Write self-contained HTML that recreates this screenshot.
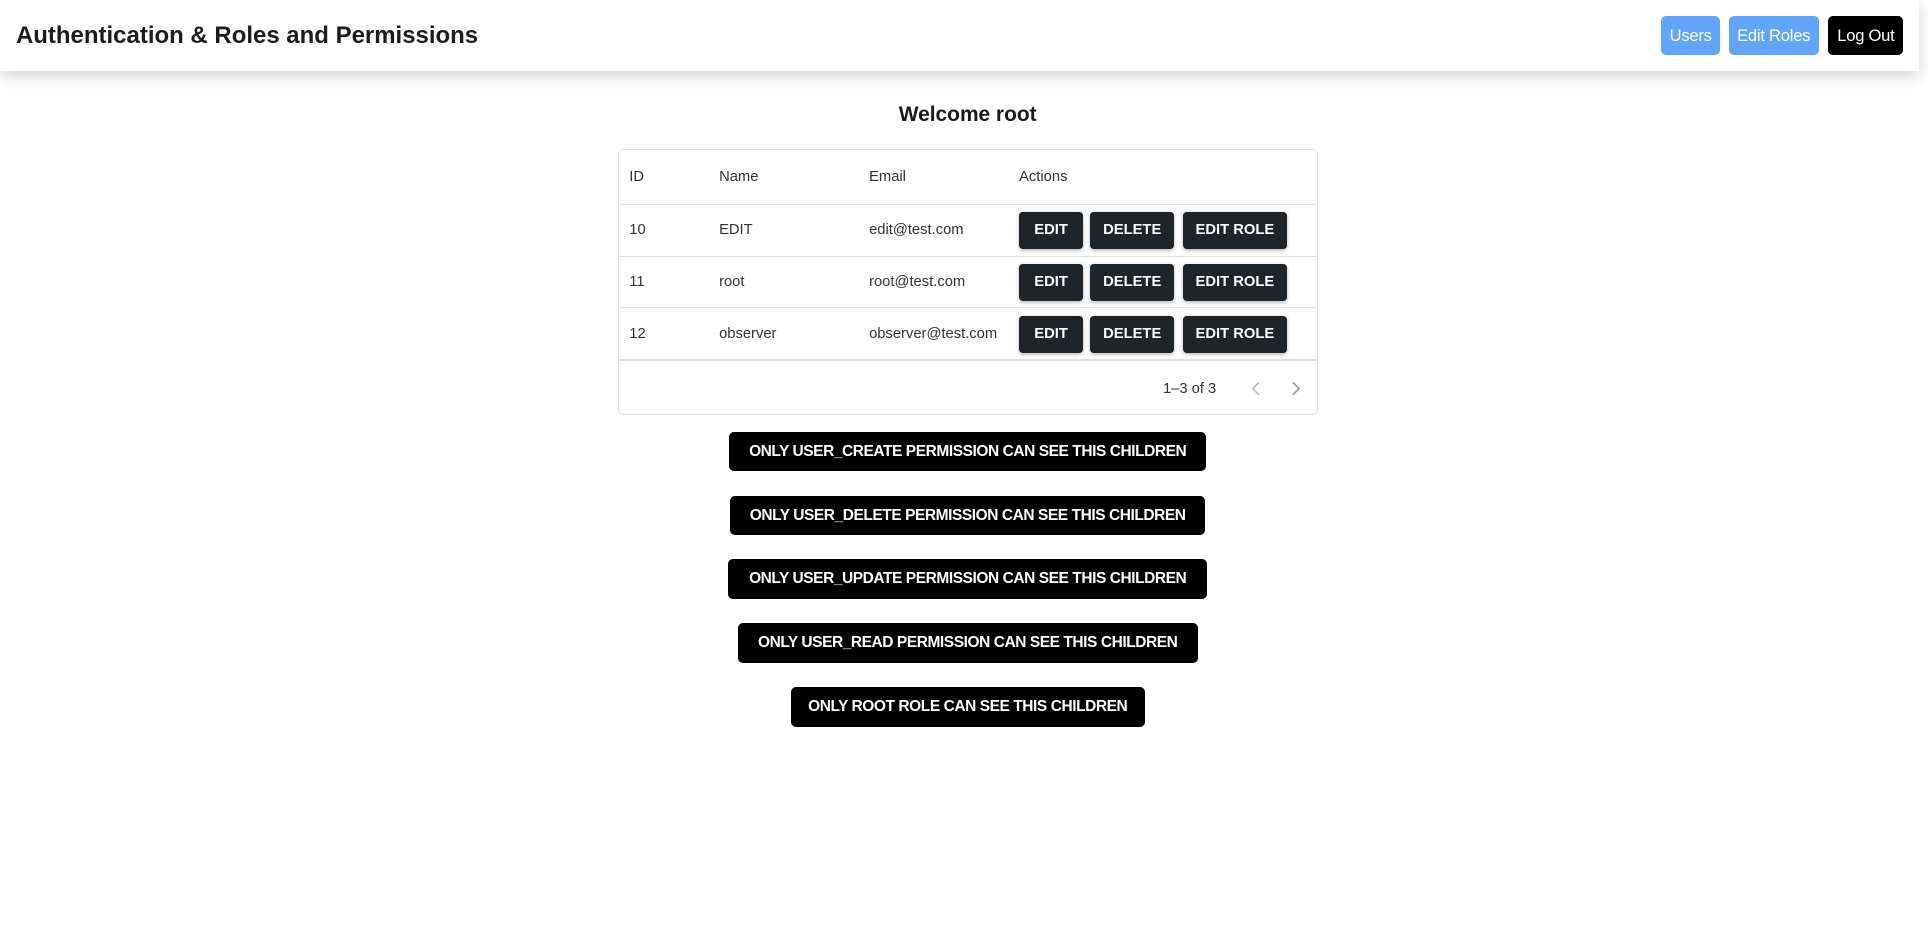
<!DOCTYPE html>
<html><head><meta charset="utf-8"><style>
html{zoom:1.22959}
body{margin:0;width:1568px;height:768px;background:#fff;font-family:"Liberation Sans",Arial,sans-serif;position:relative;overflow:hidden;color:#1a1a1a}
.hdr{position:absolute;left:0;top:0;width:1561px;height:58px;background:#fff;box-shadow:0 4px 12px rgba(0,0,0,.18)}
.title{position:absolute;left:13px;top:18px;font-size:19.5px;font-weight:bold;color:#1c1c1c;white-space:nowrap}
.nb{position:absolute;top:13px;height:32px;line-height:33px;border-radius:4px;color:#fff;font-size:13.5px;text-align:center;white-space:nowrap;letter-spacing:-0.2px}
.wel{position:absolute;left:0;width:1574px;top:84px;text-align:center;font-size:17px;font-weight:bold;color:#1a1a1a}
.tbl{position:absolute;left:503px;top:121px;width:567px;height:215px;border:1px solid #e0e0e0;border-radius:4px}
.row{position:absolute;left:0;width:567px;border-bottom:1px solid #e0e0e0;font-size:12px;color:#333}
.c{position:absolute;white-space:nowrap}
.b{position:absolute;top:6px;height:30px;line-height:30px;background:#1f2428;color:#fff;border-radius:3px;font-size:12px;font-weight:bold;text-align:center;box-shadow:0 1px 3px rgba(0,0,0,.3)}
.lab{position:absolute;height:32px;line-height:32px;background:#000;color:#fff;border-radius:4px;font-size:12.6px;font-weight:bold;text-align:center;white-space:nowrap;overflow:hidden;letter-spacing:-0.35px}
</style></head><body>
<div class="hdr">
<div class="title">Authentication &amp; Roles and Permissions</div>
<div class="nb" style="left:1351px;width:48px;background:#60a5fa">Users</div>
<div class="nb" style="left:1406px;width:73px;background:#60a5fa">Edit Roles</div>
<div class="nb" style="left:1487px;width:61px;background:#000">Log Out</div>
</div>
<div class="wel">Welcome root</div>
<div class="tbl">
<div class="row" style="top:0;height:44px"><span class="c" style="left:8px;top:16px">ID</span><span class="c" style="left:81px;top:16px">Name</span><span class="c" style="left:203px;top:16px">Email</span><span class="c" style="left:325px;top:16px">Actions</span></div>
<div class="row" style="top:45px;height:41px"><span class="c" style="left:8px;top:14px">10</span><span class="c" style="left:81px;top:14px">EDIT</span><span class="c" style="left:203px;top:14px">edit@test.com</span><div class="b" style="left:325px;width:52px">EDIT</div><div class="b" style="left:383px;width:68px">DELETE</div><div class="b" style="left:458px;width:85px">EDIT ROLE</div></div>
<div class="row" style="top:87px;height:41px"><span class="c" style="left:8px;top:14px">11</span><span class="c" style="left:81px;top:14px">root</span><span class="c" style="left:203px;top:14px">root@test.com</span><div class="b" style="left:325px;width:52px">EDIT</div><div class="b" style="left:383px;width:68px">DELETE</div><div class="b" style="left:458px;width:85px">EDIT ROLE</div></div>
<div class="row" style="top:129px;height:41px;border-bottom:2px solid #e0e0e0"><span class="c" style="left:8px;top:14px">12</span><span class="c" style="left:81px;top:14px">observer</span><span class="c" style="left:203px;top:14px">observer@test.com</span><div class="b" style="left:325px;width:52px">EDIT</div><div class="b" style="left:383px;width:68px">DELETE</div><div class="b" style="left:458px;width:85px">EDIT ROLE</div></div>
<span class="c" style="left:442px;top:188px;font-size:12px;color:#333">1–3 of 3</span>
<svg class="c" style="left:512px;top:187px" width="12" height="14" viewBox="0 0 12 14"><path d="M8 2 L3 7 L8 12" fill="none" stroke="#bbb" stroke-width="1.3"/></svg>
<svg class="c" style="left:544px;top:187px" width="12" height="14" viewBox="0 0 12 14"><path d="M4 2 L9 7 L4 12" fill="none" stroke="#999" stroke-width="1.3"/></svg>
</div>
<div class="lab" style="left:593px;top:351px;width:388px">ONLY USER_CREATE PERMISSION CAN SEE THIS CHILDREN</div>
<div class="lab" style="left:594px;top:403px;width:386px">ONLY USER_DELETE PERMISSION CAN SEE THIS CHILDREN</div>
<div class="lab" style="left:592px;top:455px;width:390px">ONLY USER_UPDATE PERMISSION CAN SEE THIS CHILDREN</div>
<div class="lab" style="left:600px;top:507px;width:374px">ONLY USER_READ PERMISSION CAN SEE THIS CHILDREN</div>
<div class="lab" style="left:643px;top:559px;width:288px">ONLY ROOT ROLE CAN SEE THIS CHILDREN</div>
</body></html>
